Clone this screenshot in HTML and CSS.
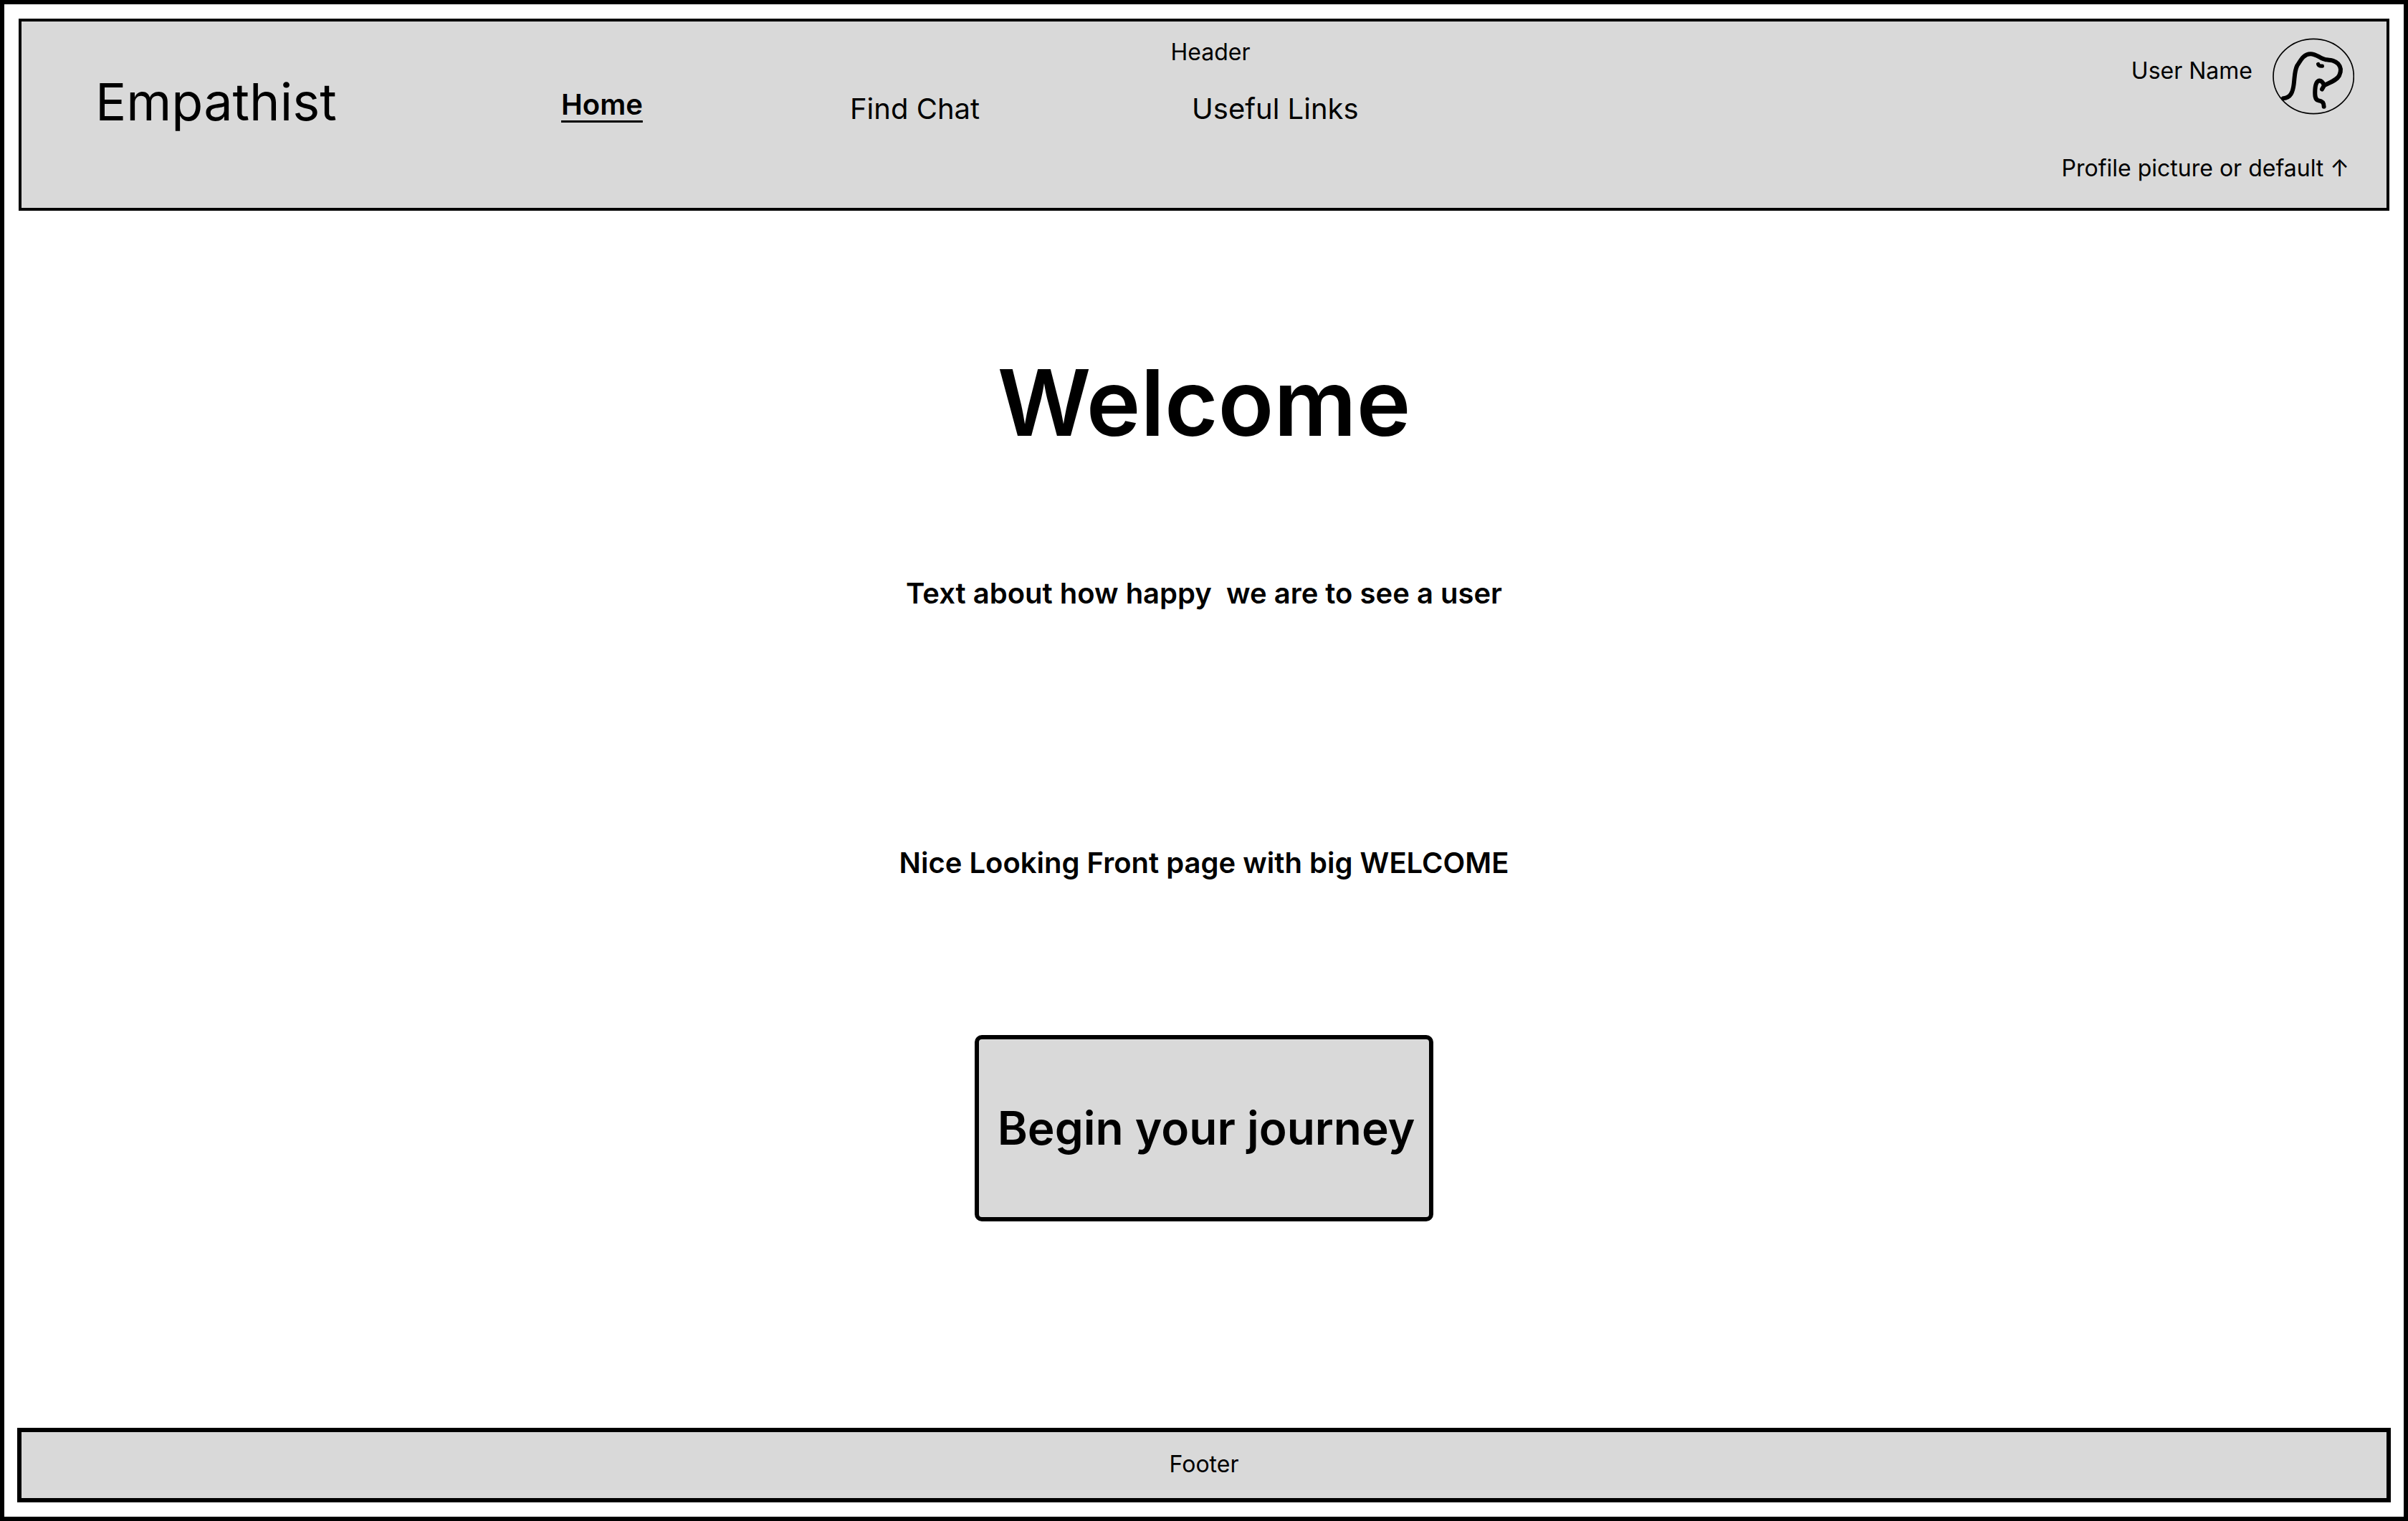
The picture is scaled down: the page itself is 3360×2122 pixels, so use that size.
FILE: index.html
```html
<!DOCTYPE html>
<html lang="en">
<head>
  <meta charset="utf-8">
  <meta name="viewport" content="width=device-width, initial-scale=1">
  <title>Empathist</title>
  <link rel="stylesheet" href="styles.css">
</head>
<body>
  <header class="site-header">
    <p class="header-label">Header</p>
    <p class="brand">Empathist</p>
    <nav class="site-nav">
      <a class="nav-link nav-link-current" href="#" aria-current="page">Home</a>
      <a class="nav-link" href="#find-chat">Find Chat</a>
      <a class="nav-link" href="#useful-links">Useful Links</a>
    </nav>
    <div class="account">
      <div class="account-user">
        <p class="user-name">User Name</p>
        <svg class="avatar" viewBox="63 42 342 318" role="img" aria-label="Profile picture">
          <ellipse cx="234.500" cy="201" rx="168.500" ry="156.500" stroke-width="5"/>
          <path stroke-width="18" d="M108 293C139 292 148 266 152 234C156 202 155 177 166 156C178 140 191 107 222 107C247 107 262 127 286 131C310 134 324 135 338 149C350 162 350 181 342 198C332 217 307 225 279 239L270 255"/>
          <path stroke-width="18" d="M279 239C274 226 270 220 260 219C245 220 242 240 241 258C240 279 240 299 255 302C273 304 278 313 278 328"/>
          <path stroke-width="16" d="M254 150Q256 159 271 158"/>
        </svg>
      </div>
      <p class="account-caption">Profile picture or default ↑</p>
    </div>
  </header>

  <main class="welcome">
    <h1 class="welcome-title">Welcome</h1>
    <p class="welcome-text">Text about how happy  we are to see a user</p>
    <p class="welcome-note">Nice Looking Front page with big WELCOME</p>
    <button class="begin-button" type="button">Begin your journey</button>
  </main>

  <footer class="site-footer">Footer</footer>
</body>
</html>
```
FILE: styles.css
```css
* {
  box-sizing: border-box;
}

body {
  display: flex;
  flex-direction: column;
  min-height: 100vh;
  margin: 0;
  padding: 20px 18px;
  border: 6px solid #000;
  background: #fff;
  color: #000;
  font: 400 32px/39px Inter, "Liberation Sans", sans-serif;
}

p,
h1 {
  margin: 0;
}

.site-header {
  display: grid;
  grid-template-columns: 690fr 1250fr 1252fr;
  grid-template-rows: auto 1fr;
  margin: 0 2px;
  padding: 23px 45px 36px 63px;
  border: 4px solid #000;
  background: #d9d9d9;
}

.header-label {
  grid-area: 1 / 1 / 2 / 4;
  justify-self: center;
}

.brand {
  grid-area: 2 / 1;
  padding: 6px 0 0 40px;
  font-size: 72px;
  line-height: 87px;
}

.site-nav {
  grid-area: 2 / 2;
  display: grid;
  grid-template-columns: 403fr 477fr 370fr;
  align-items: start;
  padding-top: 36px;
}

.nav-link {
  justify-self: start;
  color: inherit;
  font-size: 40px;
  line-height: 48px;
  text-decoration: none;
}

.nav-link-current {
  margin-top: -6px;
  font-weight: 600;
  text-decoration: underline 3px;
  text-underline-offset: 8px;
}

.account {
  grid-area: 1 / 3 / 3 / 4;
  display: flex;
  flex-direction: column;
  align-items: flex-end;
  gap: 55px;
}

.account-user {
  display: flex;
  gap: 28px;
}

.user-name {
  padding-top: 26px;
}

.avatar {
  display: block;
  width: 114px;
  height: 107px;
  fill: none;
  stroke: #000;
  stroke-linecap: round;
  stroke-linejoin: round;
}

.account-caption {
  padding-right: 7px;
}

.welcome {
  flex: 1;
  display: flex;
  flex-direction: column;
  align-items: center;
  padding: 190px 24px 48px;
  font-size: 40px;
  font-weight: 600;
  line-height: 48px;
  text-align: center;
}

.welcome-title {
  font-size: 128px;
  font-weight: 600;
  line-height: 155px;
}

.welcome-text {
  margin-top: 165px;
  white-space: pre-wrap;
}

.welcome-note {
  margin-top: 328px;
}

.begin-button {
  margin-top: 216px;
  padding: 85px 20px 85px 26px;
  border: 6px solid #000;
  border-radius: 10px;
  background: #d9d9d9;
  color: inherit;
  font: inherit;
  font-size: 64px;
  line-height: 78px;
}

.site-footer {
  padding: 25px 24px 28px;
  border: 6px solid #000;
  background: #d9d9d9;
  text-align: center;
}
```
